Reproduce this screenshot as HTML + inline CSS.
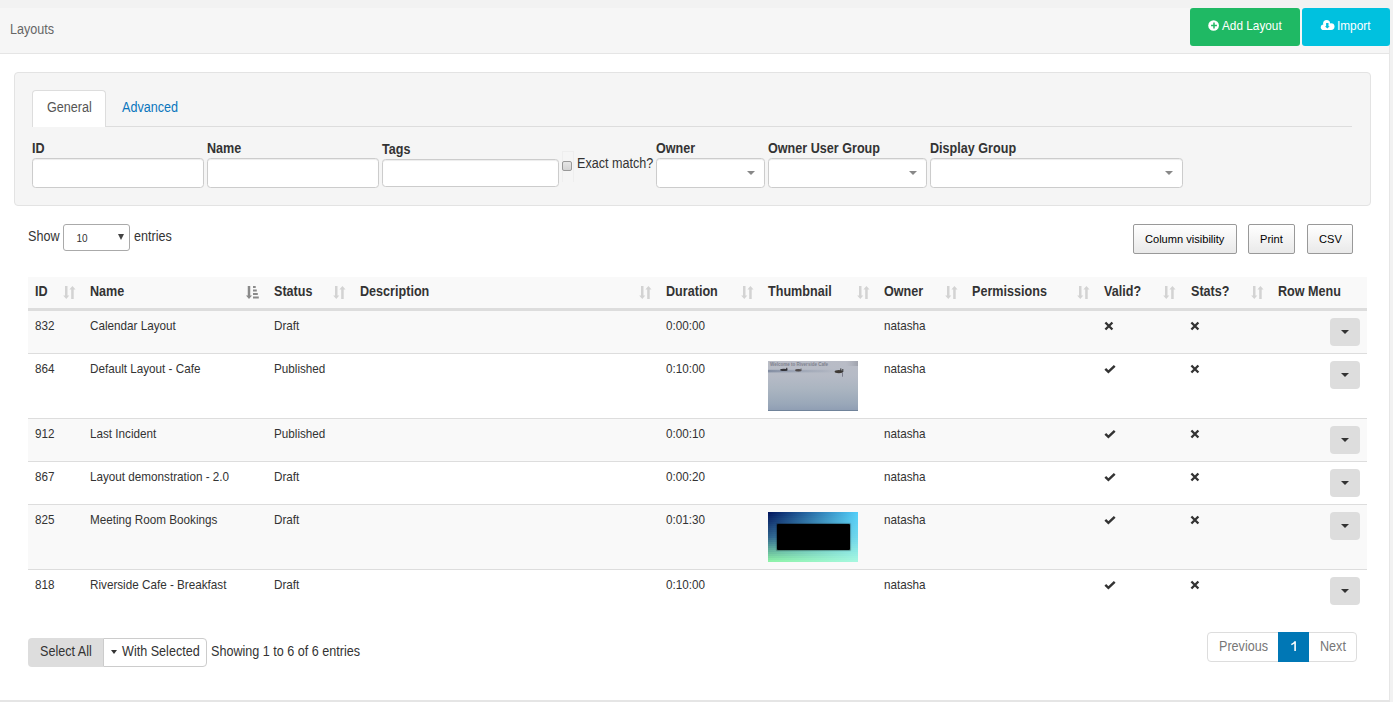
<!DOCTYPE html>
<html><head><meta charset="utf-8">
<style>
*{box-sizing:border-box;margin:0;padding:0}
html,body{width:1393px;height:702px;overflow:hidden}
body{background:#f2f2f2;font-family:"Liberation Sans",sans-serif;color:#333;position:relative}
.abs{position:absolute}
.t{position:absolute;white-space:nowrap;line-height:1;transform:translateY(1px) scaleY(1.1);transform-origin:0 0.8465em}
#main{position:absolute;left:0;top:8px;width:1390px;height:694px;background:#fff;border-right:1px solid #e6e6e6;border-bottom:2px solid #e5e5e5}
#hdr{position:absolute;left:0;top:8px;width:1389px;height:46px;background:#f6f6f6;border-bottom:1px solid #e5e5e5}
.btn-hdr{position:absolute;top:8px;height:38px;border-radius:3px;color:#fff;font-size:12px}
#panel{position:absolute;left:14px;top:72px;width:1357px;height:134px;background:#f5f5f5;border:1px solid #e3e3e3;border-radius:4px}
.inp{position:absolute;top:158px;height:30px;background:#fff;border:1px solid #ccc;border-radius:3.6px;box-shadow:inset 0 1px 1px rgba(0,0,0,.075)}
.lbl{font-weight:bold;font-size:12.6px;color:#333}
.arr{position:absolute;width:0;height:0;border-left:4px solid transparent;border-right:4px solid transparent;border-top:4px solid #888}
.dtb{position:absolute;top:224px;height:30px;border:1px solid #999;border-radius:2px;background:linear-gradient(to bottom,#fff 0%,#e9e9e9 100%);font-size:11.09px;color:#000}
#thead{position:absolute;left:28px;top:277px;width:1339px;height:33px;background:#f9f9f9;border-bottom:2px solid #ddd}
.th{font-weight:bold;font-size:12.6px;color:#333}
.row{position:absolute;left:28px;width:1339px;border-top:1px solid #ddd}
.odd{background:#f9f9f9}
.td{font-size:11.7px;color:#333}
.rmb{position:absolute;left:1302px;top:7px;width:30px;height:28px;background:#ddd;border-radius:4px}
.rmb:after{content:"";position:absolute;left:11px;top:11.5px;border-left:4px solid transparent;border-right:4px solid transparent;border-top:4px solid #333}
.thumb{position:absolute;width:90px;height:50px}
.cafe{background:linear-gradient(to bottom,#b9bdc7 0%,#b3b9c4 25%,#a9b4c1 50%,#98a7b8 85%,#8d9db2 100%);border-bottom:1px solid #6f8197}
.meet{background-image:linear-gradient(to right,#02175e,#53cffa),linear-gradient(to right,#061d62,#56d0f9),linear-gradient(to right,#092466,#58d1f8),linear-gradient(to right,#0d2a69,#5ad2f7),linear-gradient(to right,#11306d,#5dd3f6),linear-gradient(to right,#143671,#5fd3f5),linear-gradient(to right,#183d75,#62d4f4),linear-gradient(to right,#1c4379,#64d5f3),linear-gradient(to right,#1f497d,#66d6f2),linear-gradient(to right,#234f80,#69d7f1),linear-gradient(to right,#275684,#6bd7f0),linear-gradient(to right,#2a5c88,#6ed8ef),linear-gradient(to right,#2e628c,#70d9ee),linear-gradient(to right,#366e8e,#74dbed),linear-gradient(to right,#3e7a90,#79deec),linear-gradient(to right,#468693,#7de0eb),linear-gradient(to right,#4d9295,#82e3ea),linear-gradient(to right,#559e97,#86e5e8),linear-gradient(to right,#5daa99,#8be8e7),linear-gradient(to right,#65b59c,#8feae6),linear-gradient(to right,#6dc19e,#94ede5),linear-gradient(to right,#75cda0,#98efe4),linear-gradient(to right,#7cd9a2,#9df2e3),linear-gradient(to right,#84e5a5,#a1f4e2),linear-gradient(to right,#8cf1a7,#a6f7e1);background-size:90px 2px;background-repeat:no-repeat;background-position:0 0px,0 2px,0 4px,0 6px,0 8px,0 10px,0 12px,0 14px,0 16px,0 18px,0 20px,0 22px,0 24px,0 26px,0 28px,0 30px,0 32px,0 34px,0 36px,0 38px,0 40px,0 42px,0 44px,0 46px,0 48px}
.meet:after{content:"";position:absolute;left:9px;top:12px;width:73px;height:26px;background:#000;border-radius:1px;box-shadow:0 0 1px 0.5px rgba(0,0,0,.3)}
.si{display:block}
</style></head>
<body>
<div id="main"></div>
<div id="hdr"></div>
<div class="t" style="left:10px;top:23px;font-size:12.6px;color:#666">Layouts</div>
<div class="btn-hdr" style="left:1190px;width:110px;background:#1fb964"></div>
<div class="btn-hdr" style="left:1302px;width:88px;background:#00c1df"></div>
<svg class="abs" style="left:1208px;top:20px" width="12" height="11" viewBox="0 0 12 11"><circle cx="5.6" cy="5.5" r="5.35" fill="#fff"/><path d="M5.25 2.6h1.5v2.15h2.15v1.5H6.75v2.15h-1.5V6.25H3.1v-1.5h2.15z" fill="#1fb964"/></svg>
<div class="t" style="left:1222px;top:20px;font-size:11.8px;color:#fff">Add Layout</div>
<svg class="abs" style="left:1320px;top:19px" width="15" height="12" viewBox="0 0 15 12"><g fill="#fff"><circle cx="3.6" cy="8.2" r="2.8"/><circle cx="6.6" cy="4.6" r="3.5"/><circle cx="11.1" cy="7.6" r="3.4"/><rect x="3.6" y="6" width="7.5" height="5"/></g><path d="M6.1 4h2.4v3.3h1.2L7.3 9.6 4.9 7.3h1.2z" fill="#00c1df"/></svg>
<div class="t" style="left:1337px;top:20px;font-size:11.8px;color:#fff">Import</div>

<div id="panel"></div>
<div class="abs" style="left:32px;top:126px;width:1320px;height:1px;background:#ddd"></div>
<div class="abs" style="left:32px;top:90px;width:74px;height:37px;background:#fff;border:1px solid #ddd;border-bottom:none;border-radius:4px 4px 0 0"></div>
<div class="t" style="left:47px;top:101px;font-size:12.6px;color:#555">General</div>
<div class="t" style="left:122px;top:101px;font-size:12.6px;color:#0a76bd">Advanced</div>

<div class="t lbl" style="left:32px;top:142px">ID</div>
<div class="t lbl" style="left:207px;top:142px">Name</div>
<div class="t lbl" style="left:382px;top:143px">Tags</div>
<div class="t lbl" style="left:656px;top:142px">Owner</div>
<div class="t lbl" style="left:768px;top:142px">Owner User Group</div>
<div class="t lbl" style="left:930px;top:142px">Display Group</div>
<div class="inp" style="left:32px;width:172px"></div>
<div class="inp" style="left:207px;width:172px"></div>
<div class="inp" style="left:382px;top:159px;width:177px;height:28px"></div>
<div class="abs" style="left:562px;top:151px;width:12px;height:31px;border:1px solid #eeeeee;border-bottom:none"></div>
<div class="abs" style="left:562px;top:161px;width:10px;height:10px;border:1px solid #999;border-radius:2px;background:linear-gradient(#e6e6e6,#d4d4d4)"></div>
<div class="t" style="left:577px;top:157px;font-size:12.6px">Exact match?</div>
<div class="inp" style="left:656px;width:109px"></div>
<div class="inp" style="left:768px;width:159px"></div>
<div class="inp" style="left:930px;width:253px"></div>
<div class="arr" style="left:747px;top:171px"></div>
<div class="arr" style="left:909px;top:171px"></div>
<div class="arr" style="left:1165px;top:171px"></div>

<div class="t" style="left:28px;top:230px;font-size:12.6px">Show</div>
<div class="abs" style="left:63px;top:224px;width:67px;height:27px;border:1px solid #aaa;border-radius:3px;background:#fff"></div>
<div class="t" style="left:76.5px;top:233px;font-size:10px">10</div>
<div class="abs" style="left:118px;top:234px;border-left:3px solid transparent;border-right:3px solid transparent;border-top:6px solid #444"></div>
<div class="t" style="left:134px;top:230px;font-size:12.6px">entries</div>

<div class="dtb" style="left:1133px;width:104px"></div>
<div class="dtb" style="left:1248px;width:47px"></div>
<div class="dtb" style="left:1307px;width:46px"></div>
<div class="t" style="left:1145px;top:233px;font-size:11.09px;color:#000;transform:translateY(1px)">Column visibility</div>
<div class="t" style="left:1260px;top:233px;font-size:11.09px;color:#000;transform:translateY(1px)">Print</div>
<div class="t" style="left:1319px;top:233px;font-size:11.09px;color:#000;transform:translateY(1px)">CSV</div>

<div id="thead"></div>
<div class="t th" style="left:35px;top:285px">ID</div>
<div class="t th" style="left:90px;top:285px">Name</div>
<div class="t th" style="left:274px;top:285px">Status</div>
<div class="t th" style="left:360px;top:285px">Description</div>
<div class="t th" style="left:666px;top:285px">Duration</div>
<div class="t th" style="left:768px;top:285px">Thumbnail</div>
<div class="t th" style="left:884px;top:285px">Owner</div>
<div class="t th" style="left:972px;top:285px">Permissions</div>
<div class="t th" style="left:1104px;top:285px">Valid?</div>
<div class="t th" style="left:1191px;top:285px">Stats?</div>
<div class="t th" style="left:1278px;top:285px">Row Menu</div>

<!--TABLE-->
<div class="abs" style="left:63px;top:286px"><svg class="si" width="13" height="13" viewBox="0 0 13 13"><path d="M2 0h2.5v9.4h1.8L3.25 13 0.2 9.4h1.8z M8.2 13h2.5V3.6h1.8L9.45 0 6.4 3.6h1.8z" fill="#d3d3d3"/></svg></div>
<div class="abs" style="left:246px;top:286px"><svg class="si" width="13" height="13" viewBox="0 0 13 13"><path d="M1.75 0h2.5v9.4h1.8L3 13 0 9.4h1.75z M7 0.1h2.7v1.9H7z M7 3.6h3.8v1.9H7z M7 7.1h4.8v1.9H7z M7 10.6h5.8v1.9H7z" fill="#8a8a8a"/></svg></div>
<div class="abs" style="left:333px;top:286px"><svg class="si" width="13" height="13" viewBox="0 0 13 13"><path d="M2 0h2.5v9.4h1.8L3.25 13 0.2 9.4h1.8z M8.2 13h2.5V3.6h1.8L9.45 0 6.4 3.6h1.8z" fill="#d3d3d3"/></svg></div>
<div class="abs" style="left:639px;top:286px"><svg class="si" width="13" height="13" viewBox="0 0 13 13"><path d="M2 0h2.5v9.4h1.8L3.25 13 0.2 9.4h1.8z M8.2 13h2.5V3.6h1.8L9.45 0 6.4 3.6h1.8z" fill="#d3d3d3"/></svg></div>
<div class="abs" style="left:741px;top:286px"><svg class="si" width="13" height="13" viewBox="0 0 13 13"><path d="M2 0h2.5v9.4h1.8L3.25 13 0.2 9.4h1.8z M8.2 13h2.5V3.6h1.8L9.45 0 6.4 3.6h1.8z" fill="#d3d3d3"/></svg></div>
<div class="abs" style="left:857px;top:286px"><svg class="si" width="13" height="13" viewBox="0 0 13 13"><path d="M2 0h2.5v9.4h1.8L3.25 13 0.2 9.4h1.8z M8.2 13h2.5V3.6h1.8L9.45 0 6.4 3.6h1.8z" fill="#d3d3d3"/></svg></div>
<div class="abs" style="left:945px;top:286px"><svg class="si" width="13" height="13" viewBox="0 0 13 13"><path d="M2 0h2.5v9.4h1.8L3.25 13 0.2 9.4h1.8z M8.2 13h2.5V3.6h1.8L9.45 0 6.4 3.6h1.8z" fill="#d3d3d3"/></svg></div>
<div class="abs" style="left:1077px;top:286px"><svg class="si" width="13" height="13" viewBox="0 0 13 13"><path d="M2 0h2.5v9.4h1.8L3.25 13 0.2 9.4h1.8z M8.2 13h2.5V3.6h1.8L9.45 0 6.4 3.6h1.8z" fill="#d3d3d3"/></svg></div>
<div class="abs" style="left:1163px;top:286px"><svg class="si" width="13" height="13" viewBox="0 0 13 13"><path d="M2 0h2.5v9.4h1.8L3.25 13 0.2 9.4h1.8z M8.2 13h2.5V3.6h1.8L9.45 0 6.4 3.6h1.8z" fill="#d3d3d3"/></svg></div>
<div class="abs" style="left:1251px;top:286px"><svg class="si" width="13" height="13" viewBox="0 0 13 13"><path d="M2 0h2.5v9.4h1.8L3.25 13 0.2 9.4h1.8z M8.2 13h2.5V3.6h1.8L9.45 0 6.4 3.6h1.8z" fill="#d3d3d3"/></svg></div>
<div class="row odd" style="top:310px;height:43px"><div class="rmb"></div></div>
<div class="t td" style="left:35px;top:319px">832</div>
<div class="t td" style="left:90px;top:319px">Calendar Layout</div>
<div class="t td" style="left:274px;top:319px">Draft</div>
<div class="t td" style="left:666px;top:319px">0:00:00</div>
<div class="t td" style="left:884px;top:319px">natasha</div>
<div class="abs" style="left:1104px;top:321px"><svg class="si" width="10" height="10" viewBox="0 0 10 10"><path d="M1.4 1.5L8.4 8.5M8.4 1.5L1.4 8.5" fill="none" stroke="#333" stroke-width="2.4"/></svg></div>
<div class="abs" style="left:1190px;top:321px"><svg class="si" width="10" height="10" viewBox="0 0 10 10"><path d="M1.4 1.5L8.4 8.5M8.4 1.5L1.4 8.5" fill="none" stroke="#333" stroke-width="2.4"/></svg></div>
<div class="row" style="top:353px;height:65px"><div class="rmb"></div></div>
<div class="t td" style="left:35px;top:362px">864</div>
<div class="t td" style="left:90px;top:362px">Default Layout - Cafe</div>
<div class="t td" style="left:274px;top:362px">Published</div>
<div class="t td" style="left:666px;top:362px">0:10:00</div>
<div class="t td" style="left:884px;top:362px">natasha</div>
<svg class="abs" style="left:768px;top:361px" width="90" height="50" viewBox="0 0 90 50">
<defs><linearGradient id="cg" x1="0" y1="0" x2="0" y2="1"><stop offset="0" stop-color="#b9bcc6"/><stop offset="0.3" stop-color="#b6bbc6"/><stop offset="0.55" stop-color="#abb5c1"/><stop offset="0.85" stop-color="#9aa8b9"/><stop offset="1" stop-color="#8e9db3"/></linearGradient>
<linearGradient id="cs" x1="0" y1="0" x2="1" y2="0"><stop offset="0" stop-color="#7d889e" stop-opacity=".9"/><stop offset="0.4" stop-color="#8c96aa" stop-opacity=".6"/><stop offset="0.75" stop-color="#98a1b2" stop-opacity=".4"/><stop offset="1" stop-color="#a0a8b8" stop-opacity="0"/></linearGradient>
<linearGradient id="ct" x1="0" y1="0" x2="1" y2="0"><stop offset="0" stop-color="#a6a9b3" stop-opacity="0"/><stop offset="1" stop-color="#9c9fa9" stop-opacity=".9"/></linearGradient></defs>
<rect width="90" height="50" fill="url(#cg)"/>
<rect x="78" y="0" width="12" height="5" fill="url(#ct)"/>
<rect x="0" y="8.8" width="72" height="2.6" fill="url(#cs)"/>
<text x="2" y="4.9" font-family="Liberation Sans" font-weight="bold" font-size="4.6" fill="#7f828e" textLength="58" lengthAdjust="spacingAndGlyphs">Welcome to Riverside Cafe</text>
<ellipse cx="15.8" cy="8.9" rx="3.6" ry="1.1" fill="#34343a"/><rect x="18.2" y="6.8" width="1.1" height="2.6" fill="#2a2a30"/>
<ellipse cx="30.3" cy="9.2" rx="3.2" ry="1.2" fill="#4e4848"/><rect x="32.6" y="7.4" width="0.9" height="2.2" fill="#6a6a70"/>
<ellipse cx="70.8" cy="10.6" rx="4.2" ry="1.7" fill="#3f3a36"/><rect x="72.3" y="7.4" width="1" height="3.3" fill="#333"/><rect x="74.3" y="8" width="1" height="3" fill="#333"/><rect x="74" y="11.5" width="0.9" height="4.2" fill="#556" opacity=".7"/>
<rect x="0" y="49" width="90" height="1" fill="#70839a"/>
</svg>
<div class="abs" style="left:1104px;top:365px"><svg class="si" width="12" height="10" viewBox="0 0 12 10"><path d="M1.3 3.9L4.4 6.8L10.7 0.9" fill="none" stroke="#333" stroke-width="2.5"/></svg></div>
<div class="abs" style="left:1190px;top:364px"><svg class="si" width="10" height="10" viewBox="0 0 10 10"><path d="M1.4 1.5L8.4 8.5M8.4 1.5L1.4 8.5" fill="none" stroke="#333" stroke-width="2.4"/></svg></div>
<div class="row odd" style="top:418px;height:43px"><div class="rmb"></div></div>
<div class="t td" style="left:35px;top:427px">912</div>
<div class="t td" style="left:90px;top:427px">Last Incident</div>
<div class="t td" style="left:274px;top:427px">Published</div>
<div class="t td" style="left:666px;top:427px">0:00:10</div>
<div class="t td" style="left:884px;top:427px">natasha</div>
<div class="abs" style="left:1104px;top:430px"><svg class="si" width="12" height="10" viewBox="0 0 12 10"><path d="M1.3 3.9L4.4 6.8L10.7 0.9" fill="none" stroke="#333" stroke-width="2.5"/></svg></div>
<div class="abs" style="left:1190px;top:429px"><svg class="si" width="10" height="10" viewBox="0 0 10 10"><path d="M1.4 1.5L8.4 8.5M8.4 1.5L1.4 8.5" fill="none" stroke="#333" stroke-width="2.4"/></svg></div>
<div class="row" style="top:461px;height:43px"><div class="rmb"></div></div>
<div class="t td" style="left:35px;top:470px">867</div>
<div class="t td" style="left:90px;top:470px">Layout demonstration - 2.0</div>
<div class="t td" style="left:274px;top:470px">Draft</div>
<div class="t td" style="left:666px;top:470px">0:00:20</div>
<div class="t td" style="left:884px;top:470px">natasha</div>
<div class="abs" style="left:1104px;top:473px"><svg class="si" width="12" height="10" viewBox="0 0 12 10"><path d="M1.3 3.9L4.4 6.8L10.7 0.9" fill="none" stroke="#333" stroke-width="2.5"/></svg></div>
<div class="abs" style="left:1190px;top:472px"><svg class="si" width="10" height="10" viewBox="0 0 10 10"><path d="M1.4 1.5L8.4 8.5M8.4 1.5L1.4 8.5" fill="none" stroke="#333" stroke-width="2.4"/></svg></div>
<div class="row odd" style="top:504px;height:65px"><div class="rmb"></div></div>
<div class="t td" style="left:35px;top:513px">825</div>
<div class="t td" style="left:90px;top:513px">Meeting Room Bookings</div>
<div class="t td" style="left:274px;top:513px">Draft</div>
<div class="t td" style="left:666px;top:513px">0:01:30</div>
<div class="t td" style="left:884px;top:513px">natasha</div>
<div class="thumb meet" style="left:768px;top:512px"></div>
<div class="abs" style="left:1104px;top:516px"><svg class="si" width="12" height="10" viewBox="0 0 12 10"><path d="M1.3 3.9L4.4 6.8L10.7 0.9" fill="none" stroke="#333" stroke-width="2.5"/></svg></div>
<div class="abs" style="left:1190px;top:515px"><svg class="si" width="10" height="10" viewBox="0 0 10 10"><path d="M1.4 1.5L8.4 8.5M8.4 1.5L1.4 8.5" fill="none" stroke="#333" stroke-width="2.4"/></svg></div>
<div class="row" style="top:569px;height:43px"><div class="rmb"></div></div>
<div class="t td" style="left:35px;top:578px">818</div>
<div class="t td" style="left:90px;top:578px">Riverside Cafe - Breakfast</div>
<div class="t td" style="left:274px;top:578px">Draft</div>
<div class="t td" style="left:666px;top:578px">0:10:00</div>
<div class="t td" style="left:884px;top:578px">natasha</div>
<div class="abs" style="left:1104px;top:581px"><svg class="si" width="12" height="10" viewBox="0 0 12 10"><path d="M1.3 3.9L4.4 6.8L10.7 0.9" fill="none" stroke="#333" stroke-width="2.5"/></svg></div>
<div class="abs" style="left:1190px;top:580px"><svg class="si" width="10" height="10" viewBox="0 0 10 10"><path d="M1.4 1.5L8.4 8.5M8.4 1.5L1.4 8.5" fill="none" stroke="#333" stroke-width="2.4"/></svg></div>
<!--/TABLE-->
<div class="abs" style="left:28px;top:638px;width:75px;height:29px;background:#ddd;border-radius:4px 0 0 4px"></div>
<div class="abs" style="left:103px;top:638px;width:104px;height:29px;background:#fff;border:1px solid #ccc;border-radius:0 4px 4px 0"></div>
<div class="t" style="left:40px;top:645px;font-size:12.6px">Select All</div>
<div class="abs" style="left:111px;top:649.5px;border-left:3.75px solid transparent;border-right:3.75px solid transparent;border-top:4.5px solid #333"></div>
<div class="t" style="left:122px;top:645px;font-size:12.6px">With Selected</div>
<div class="t" style="left:211px;top:645px;font-size:12.6px">Showing 1 to 6 of 6 entries</div>

<div class="abs" style="left:1207px;top:632px;width:150px;height:30px;border:1px solid #ddd;border-radius:4px;background:#fff"></div>
<div class="abs" style="left:1278px;top:632px;width:31px;height:30px;background:#0077b5"></div>
<div class="t" style="left:1219px;top:640px;font-size:12.6px;color:#777">Previous</div>
<svg class="abs" style="left:1290px;top:640px" width="8" height="12" viewBox="0 0 8 12"><path d="M4.4 1.2h1.5v9.9H4.3V3.5C3.6 4.2 2.6 4.8 1.3 5.2V3.7C2.6 3.1 3.8 2.2 4.4 1.2z" fill="#fff"/></svg>
<div class="t" style="left:1320px;top:640px;font-size:12.6px;color:#777">Next</div>
</body></html>
